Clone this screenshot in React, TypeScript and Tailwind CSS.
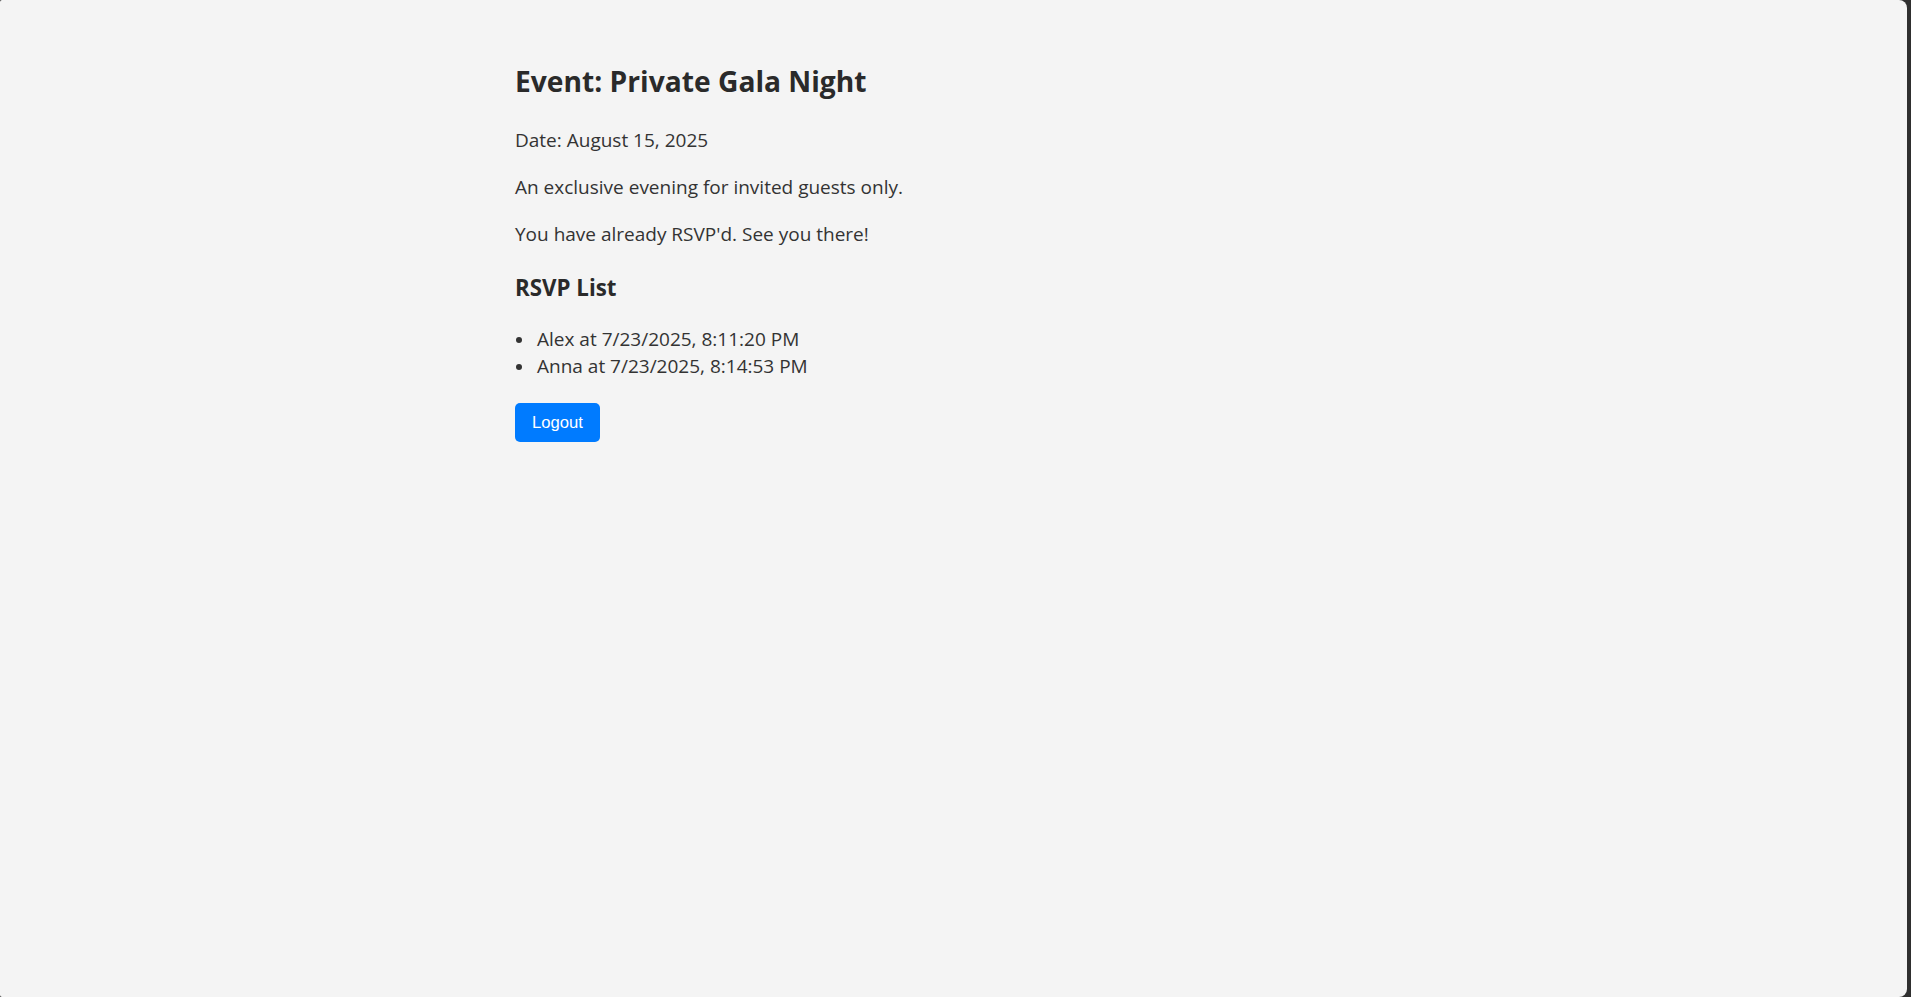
const rsvps = [
  { name: 'Alex', at: '7/23/2025, 8:11:20 PM' },
  { name: 'Anna', at: '7/23/2025, 8:14:53 PM' },
]

export default function App() {
  return (
    <div className="h-[997px] w-full bg-[#2f2f2f] flex">
      <main className="flex-1 mr-[4px] bg-[#f4f4f4] rounded-tl-[2px] rounded-bl-[2px] rounded-r-[8px] font-['Open_Sans',sans-serif] text-[#333]">
        <div className="w-[877px] mx-auto pt-[61px]">
          <h2 className="text-[28.2px] leading-[40px] font-bold text-[#2a2a2a]">Event: Private Gala Night</h2>
          <p className="mt-[26px] text-[19px] leading-[27px]">Date: August 15, 2025</p>
          <p className="mt-[20px] text-[19px] leading-[27px]">An exclusive evening for invited guests only.</p>
          <p className="mt-[20px] text-[19px] leading-[27px]">You have already RSVP'd. See you there!</p>

          <h3 className="mt-[24px] text-[22.3px] leading-[31px] font-bold text-[#2a2a2a]">RSVP List</h3>
          <ul className="mt-[23px]">
            {rsvps.map((r) => (
              <li key={r.name} className="flex items-center text-[19px] leading-[27.3px]">
                <span className="w-[6px] h-[6px] rounded-full bg-[#333] ml-[1px] mr-[15px] flex-shrink-0" />
                {r.name} at {r.at}
              </li>
            ))}
          </ul>

          <button className="mt-[22px] w-[85px] h-[39px] rounded-[5px] bg-[#007bff] text-white font-['Liberation_Sans',sans-serif] text-[16.67px] leading-[39px]">
            Logout
          </button>
        </div>
      </main>
    </div>
  )
}
